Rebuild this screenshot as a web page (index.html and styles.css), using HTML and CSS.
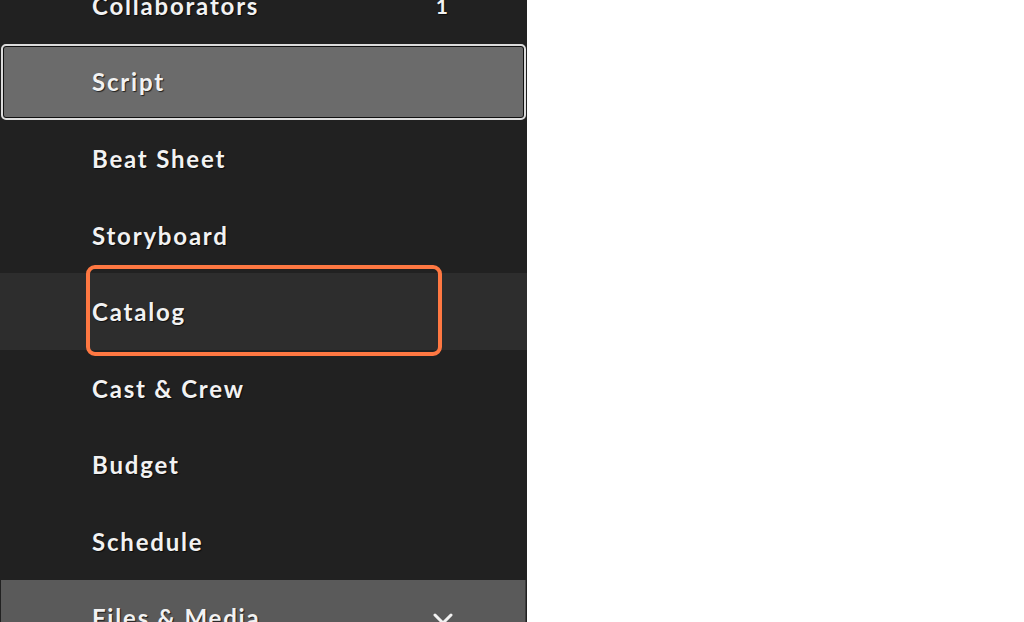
FILE: index.html
```html
<!DOCTYPE html>
<html lang="en">
<head>
  <meta charset="UTF-8" />
  <meta name="viewport" content="width=device-width, initial-scale=1" />
  <title>Project Menu</title>
  <link rel="stylesheet" href="styles.css">
</head>
<body>

  <nav class="sidebar">
    <ul class="menu">
      <li class="menu-item">
        <span>Collaborators</span>
        <span class="count">1</span>
      </li>
      <li class="menu-item active">
        <span>Script</span>
      </li>
      <li class="menu-item">
        <span>Beat Sheet</span>
      </li>
      <li class="menu-item">
        <span>Storyboard</span>
      </li>
      <li class="menu-item hovered">
        <span>Catalog</span>
        <div class="highlight"></div>
      </li>
      <li class="menu-item">
        <span>Cast &amp; Crew</span>
      </li>
      <li class="menu-item">
        <span>Budget</span>
      </li>
      <li class="menu-item">
        <span>Schedule</span>
      </li>
      <li class="menu-item group">
        <span>Files &amp; Media</span>
        <svg class="chevron" width="22" height="14" viewBox="0 0 22 14">
          <polyline points="3,3 11,11 19,3" fill="none" stroke="#f2f2f2" stroke-width="3" stroke-linecap="round" stroke-linejoin="round" />
        </svg>
      </li>
    </ul>
  </nav>

</body>
</html>
```

FILE: styles.css
```css
body {
  margin: 0;
  background-color: #ffffff;
  font-family: Lato, 'Open Sans', sans-serif;
  overflow: hidden;
  height: 622px;
}

.sidebar {
  width: 527px;
  height: 700px;
  background-color: #212121;
  margin-top: -33px;
}

.menu {
  list-style: none;
  margin: 0;
  padding: 0;
}

.menu-item {
  position: relative;
  box-sizing: border-box;
  height: 76.6px;
  display: flex;
  align-items: center;
  justify-content: space-between;
  padding: 0 79px 0 92px;
  color: #f2f2f2;
  font-size: 24px;
  font-weight: bold;
  letter-spacing: 1.8px;
  text-shadow: 1px 1px 1px rgba(0, 0, 0, 0.7);
}

.count {
  font-size: 21px;
  letter-spacing: 0;
}

.active {
  background-color: #6b6b6b;
  border: 2px solid #dcdcdc;
  border-radius: 5px;
  box-shadow: inset 0 0 0 1px #111;
  margin: 0 1px;
  padding-left: 89px;
}

.hovered {
  background-color: #2d2d2d;
}

.highlight {
  position: absolute;
  left: 86px;
  top: -8px;
  width: 348px;
  height: 83px;
  border: 4px solid #ff7842;
  border-radius: 9px;
}

.group {
  background-color: #5a5a5a;
  margin: 0 1px;
  border-right: 1px solid #3c3c3c;
  padding-left: 91px;
  padding-right: 71px;
  height: 80px;
  align-items: flex-start;
  padding-top: 23px;
}

.chevron {
  margin-top: 9px;
}
```
